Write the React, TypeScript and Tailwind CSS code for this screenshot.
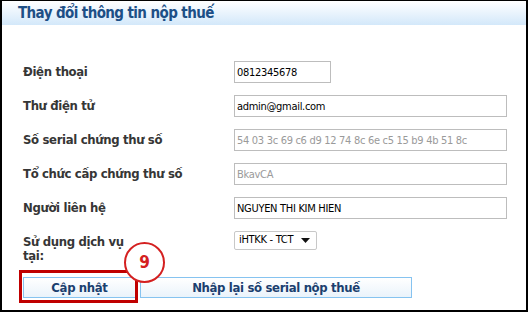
import React from "react";

const font = { fontFamily: '"DejaVu Sans Condensed", "DejaVu Sans", sans-serif' };

function Row({ label, children, top }: { label: React.ReactNode; children: React.ReactNode; top?: boolean }) {
  return (
    <div className={`flex ${top ? "items-start" : "items-center"} h-[22px]`}>
      <div className={`w-[211px] shrink-0 text-[13px] font-bold text-[#363636] leading-[14px] tracking-[-0.35px] ${top ? "pt-[4px]" : ""}`}>{label}</div>
      {children}
    </div>
  );
}

export default function App() {
  const inputCls =
    "h-[22px] border border-[#bdbdbd] bg-white px-[2px] text-[11px] tracking-[-0.3px] flex items-center leading-none";
  return (
    <div className="w-[528px] h-[312px] bg-white border-black border-t border-l-2 border-r-2 border-b-2 relative overflow-hidden" style={font}>
      <div className="h-[24px] bg-gradient-to-b from-white to-[#d3e8fa] flex items-center pl-[16px]">
        <span className="text-[15px] font-bold text-[#1d4f86] tracking-[-0.6px]">Thay đổi thông tin nộp thuế</span>
      </div>
      <div className="pl-[21px] pt-[36px] flex flex-col gap-[12px]">
        <Row label="Điện thoại">
          <div className={`${inputCls} w-[97px] text-black`}>0812345678</div>
        </Row>
        <Row label="Thư điện tử">
          <div className={`${inputCls} w-[273px] text-black`}>admin@gmail.com</div>
        </Row>
        <Row label="Số serial chứng thư số">
          <div className={`${inputCls} w-[273px] text-[#9a9a9a]`}>54 03 3c 69 c6 d9 12 74 8c 6e c5 15 b9 4b 51 8c</div>
        </Row>
        <Row label="Tổ chức cấp chứng thư số">
          <div className={`${inputCls} w-[273px] text-[#9a9a9a]`}>BkavCA</div>
        </Row>
        <Row label="Người liên hệ">
          <div className={`${inputCls} w-[273px] text-black`}>NGUYEN THI KIM HIEN</div>
        </Row>
        <Row label={<>Sử dụng dịch vụ<br />tại:</>} top>
          <div className="h-[19px] w-[83px] border border-[#c8c8c8] rounded-[2px] bg-white flex items-center pl-[4px] pr-[6px] justify-between text-[11px] tracking-[-0.3px] text-black">
            <span>iHTKK - TCT</span>
            <svg width="9" height="5" viewBox="0 0 9 5"><path d="M0 0h9L4.5 5z" fill="#111" /></svg>
          </div>
        </Row>
        <div className="flex gap-[4px] mt-[12px]">
          <button className="w-[113px] h-[21px] border border-[#86c3f0] bg-gradient-to-b from-white to-[#eaf3fb] text-[13px] font-bold text-[#1b3f6f] leading-none tracking-[-0.35px]">Cập nhật</button>
          <button className="w-[272px] h-[21px] border border-[#86c3f0] bg-gradient-to-b from-white to-[#eaf3fb] text-[13px] font-bold text-[#1b3f6f] leading-none tracking-[-0.35px]">Nhập lại số serial nộp thuế</button>
        </div>
      </div>
      <div className="absolute left-[17px] top-[269px] w-[119px] h-[33px] border-[3px] border-[#c00000] pointer-events-none" />
      <div className="absolute left-[122px] top-[241px] w-[41px] h-[41px] rounded-full border-2 border-[#d42020] bg-white flex items-center justify-center text-[17px] font-bold text-[#d42020]">9</div>
    </div>
  );
}
